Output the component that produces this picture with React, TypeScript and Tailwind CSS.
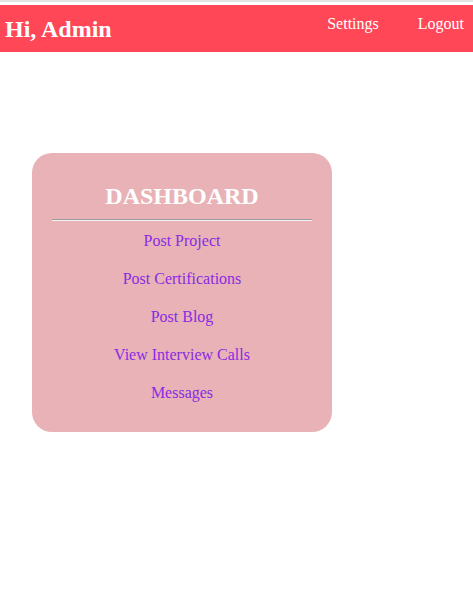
import React from "react";

export default function App() {
  const links = ["Post Project", "Post Certifications", "Post Blog", "View Interview Calls", "Messages"];
  return (
    <div className="min-h-[598px] bg-white" style={{ fontFamily: '"Liberation Serif", "Times New Roman", serif' }}>
      <div className="h-[2px] bg-[#e4e4e4]" />
      <div className="h-[3px] bg-white" />
      <header className="h-[47px] bg-[#ff4757] flex items-start justify-between">
        <h1 className="text-[24px] font-bold text-white leading-[28px] mt-[10px] ml-[5px]">Hi, Admin</h1>
        <nav className="flex gap-[39px] mr-[7px] mt-[9px] text-[16px] leading-[20px] text-white">
          <a className="-ml-[2px]">Settings</a>
          <a className="mr-[2px]">Logout</a>
        </nav>
      </header>
      <div className="ml-[32px] mt-[101px] w-[300px] h-[279px] bg-[#e8b2b6] rounded-[20px] flex flex-col items-center">
        <h2 className="mt-[29px] text-[24px] font-bold text-white leading-[28px]">DASHBOARD</h2>
        <div className="mt-[9px] w-[260px] border-t border-t-[#9a9a9a] border-b border-b-[#f2f2f2]" />
        <ul className="mt-[10px] flex flex-col items-center gap-[18px] text-[16px] leading-[20px] text-[#8a2be2]">
          {links.map((l) => (
            <li key={l}>{l}</li>
          ))}
        </ul>
      </div>
    </div>
  );
}
